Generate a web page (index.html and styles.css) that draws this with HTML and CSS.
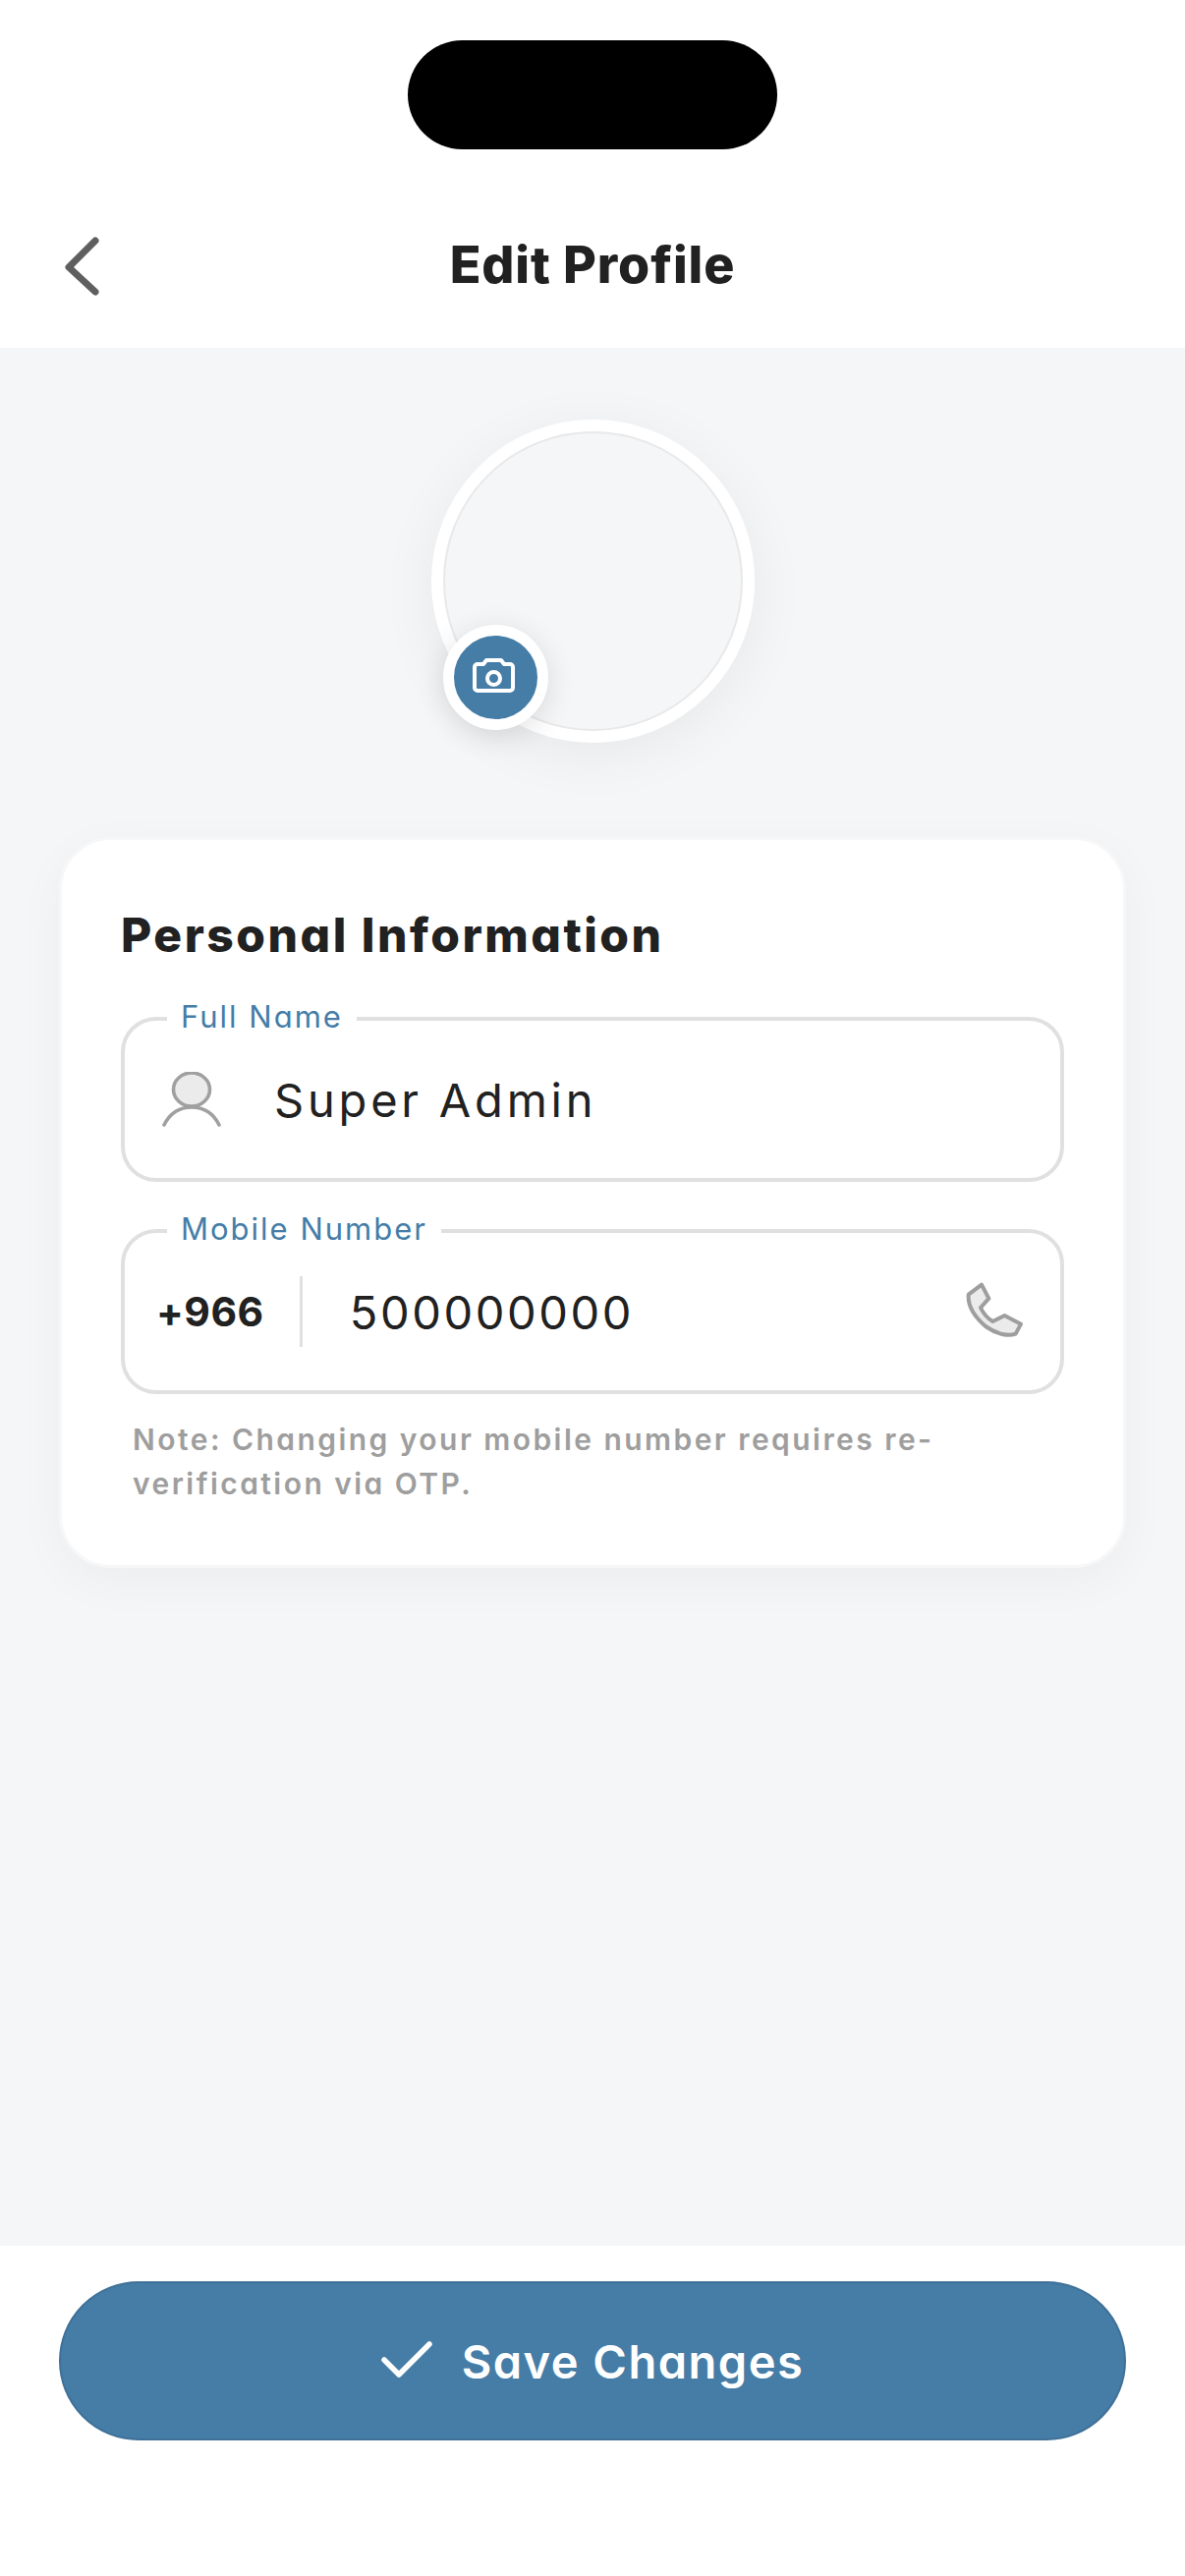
FILE: index.html
```html
<!DOCTYPE html>
<html lang="en">
<head>
    <meta charset="UTF-8">
    <meta name="viewport" content="width=device-width, initial-scale=1.0">
    <title>Edit Profile</title>
    <link rel="stylesheet" href="styles.css">
</head>
<body>
    <header class="top">
        <div class="notch"></div>
        <div class="title-row">
            <button class="back" aria-label="Back">
                <svg width="40" height="64" viewBox="0 0 40 64"><path d="M33 6 L6 33 L33 58" fill="none" stroke="#5f5f5f" stroke-width="7" stroke-linecap="round" stroke-linejoin="round"/></svg>
            </button>
            <h1>Edit Profile</h1>
        </div>
    </header>
    <main>
        <div class="avatar">
            <div class="avatar-inner"></div>
            <div class="avatar-badge">
                <svg width="70" height="60" viewBox="0 0 70 60"><path d="M17 16 h6 l3 -4 h15 l3 4 h6 a3 3 0 0 1 3 3 v21 a3 3 0 0 1 -3 3 h-33 a3 3 0 0 1 -3 -3 v-21 a3 3 0 0 1 3 -3 z" fill="none" stroke="#fff" stroke-width="4" stroke-linejoin="round"/><circle cx="33.500" cy="30.500" r="6.500" fill="none" stroke="#fff" stroke-width="4"/></svg>
            </div>
        </div>
        <section class="card">
            <h2>Personal Information</h2>
            <div class="field">
                <label>Full Name</label>
                <svg class="person-icon" width="60" height="56" viewBox="0 0 60 56"><ellipse cx="30" cy="18" rx="18.500" ry="17" fill="#ebebeb" stroke="#a0a0a0" stroke-width="3.600"/><path d="M2 54 C8 42 18 36 30 36 C42 36 52 42 58 54" fill="#fff" stroke="#a0a0a0" stroke-width="3.600" stroke-linecap="round"/></svg>
                <span class="value">Super Admin</span>
            </div>
            <div class="field">
                <label>Mobile Number</label>
                <span class="code">+966</span>
                <span class="divider"></span>
                <span class="value number">500000000</span>
                <svg class="phone-icon" width="60" height="60" viewBox="70 50 180 180"><path d="M118 58 L140 100 L115 128 C125 150 135 160 152 170 L188 152 L238 178 L222 208 C200 216 165 210 130 185 C95 155 75 125 78 88 Z" fill="#ebebeb" stroke="#9e9e9e" stroke-width="12" stroke-linejoin="round"/></svg>
            </div>
            <p class="note">Note: Changing your mobile number requires re-<br>verification via OTP.</p>
        </section>
    </main>
    <footer class="bottom">
        <button class="save">
            <svg width="52" height="40" viewBox="0 0 52 40"><path d="M3 19 L18 34 L49 3" fill="none" stroke="#fff" stroke-width="5.500" stroke-linecap="round" stroke-linejoin="round"/></svg>
            <span>Save Changes</span>
        </button>
    </footer>
</body>
</html>
```

FILE: styles.css
```css
* {
    box-sizing: border-box;
}

html, body {
    margin: 0;
    padding: 0;
}

body {
    width: 1206px;
    height: 2622px;
    display: flex;
    flex-direction: column;
    font-family: Inter, "Noto Sans", sans-serif;
    font-feature-settings: "cv11";
    color: #212121;
    background-color: #fff;
    overflow: hidden;
}

.top {
    height: 354px;
    padding-top: 41px;
    background-color: #fff;
}

.notch {
    width: 376px;
    height: 111px;
    margin: 0 auto;
    border-radius: 56px;
    background-color: #000;
}

.title-row {
    position: relative;
    margin-top: 78px;
    height: 80px;
    display: flex;
    align-items: center;
    justify-content: center;
}

.title-row h1 {
    margin: 0;
    font-size: 52px;
    line-height: 80px;
    font-weight: 800;
    letter-spacing: 0.9px;
}

.back {
    position: absolute;
    left: 64px;
    top: 9px;
    padding: 0;
    border: none;
    background: none;
    display: flex;
}

main {
    flex: 1;
    padding: 73px 60px 0;
    background-color: #f5f6f8;
}

.avatar {
    position: relative;
    width: 329px;
    height: 329px;
    margin: 0 auto;
    border: 12px solid #fff;
    border-radius: 50%;
    box-shadow: 0 12px 60px rgba(0, 0, 0, 0.06);
}

.avatar-inner {
    width: 100%;
    height: 100%;
    border: 2px solid #e9e9e9;
    border-radius: 50%;
    background-color: #f5f6f8;
}

.avatar-badge {
    position: absolute;
    left: 0;
    top: 197px;
    width: 107px;
    height: 107px;
    border: 11px solid #fff;
    border-radius: 50%;
    background-color: #457da7;
    box-shadow: 0 6px 30px rgba(0, 0, 0, 0.12);
    display: flex;
    align-items: center;
    justify-content: center;
}

.card {
    margin-top: 96px;
    height: 744px;
    padding: 61px 60px 60px;
    border: 3px solid #f7f7f8;
    border-radius: 53px;
    background-color: #fff;
    box-shadow: 0 14px 50px rgba(0, 0, 0, 0.04);
}

.card h2 {
    margin: 0 0 47px;
    font-size: 48px;
    line-height: 72px;
    font-weight: 800;
    letter-spacing: 2.5px;
}

.field {
    position: relative;
    height: 168px;
    margin-bottom: 48px;
    padding: 0 38px;
    border: 4px solid #e0e0e0;
    border-radius: 36px;
    display: flex;
    align-items: center;
}

.field label {
    position: absolute;
    left: 43px;
    top: -24px;
    padding: 0 14px;
    background-color: #fff;
    color: #457da7;
    font-size: 31px;
    line-height: 40px;
    letter-spacing: 2px;
}

.person-icon {
    margin-right: 54px;
}

.value {
    font-size: 47px;
    letter-spacing: 3.8px;
}

.code {
    font-size: 41px;
    font-weight: 700;
    margin-left: -6px;
    letter-spacing: 0.5px;
}

.divider {
    width: 3px;
    height: 72px;
    margin: 0 48px 0 36px;
    background-color: #e0e0e0;
}

.number {
    flex: 1;
    letter-spacing: 2.6px;
}

.phone-icon {
    margin-right: -2px;
}

.note {
    margin: -24px 0 0;
    padding-left: 12px;
    color: #9e9e9e;
    font-size: 30px;
    line-height: 45px;
    font-weight: 600;
    letter-spacing: 2.45px;
}

.bottom {
    height: 336px;
    padding: 36px 60px 0;
    background-color: #fff;
}

.save {
    width: 100%;
    height: 162px;
    border: 2px solid #3f7097;
    border-radius: 81px;
    background-color: #457da7;
    color: #fff;
    font-family: inherit;
    font-feature-settings: inherit;
    font-size: 47px;
    font-weight: 600;
    letter-spacing: 1.5px;
    display: flex;
    align-items: center;
    justify-content: center;
    gap: 30px;
}
```
